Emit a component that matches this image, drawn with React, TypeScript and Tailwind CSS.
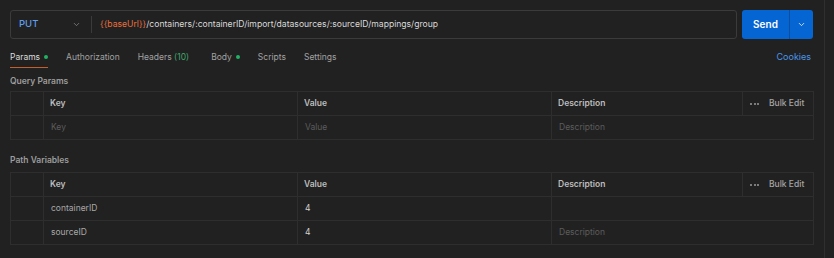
import { ChevronDown } from 'lucide-react'

const font = { fontFamily: 'Inter, "Noto Sans", sans-serif' }

type Row = { key: string; value: string; desc: string; placeholder?: boolean; descPlaceholder?: boolean }

function ParamTable({ rows }: { rows: Row[] }) {
  return (
    <div className="mx-[10px] border-x border-t border-[#2e2e2e] text-[8.5px]">
      <div className="flex h-[24px] border-b border-[#2e2e2e] font-semibold text-[#bdbdbd]">
        <div className="w-[33px] border-r border-[#2e2e2e]" />
        <div className="flex w-[254px] items-center border-r border-[#2e2e2e] pl-[6px]">Key</div>
        <div className="flex w-[254px] items-center border-r border-[#2e2e2e] pl-[6px]">Value</div>
        <div className="flex w-[191px] items-center border-r border-[#2e2e2e] pl-[6px]">Description</div>
        <div className="flex flex-1 items-center whitespace-nowrap pl-[7px] font-medium text-[#a6a6a6]">
          <span className="flex gap-[1.5px]">
            <span className="h-[2px] w-[2px] rounded-full bg-[#9a9a9a]" />
            <span className="h-[2px] w-[2px] rounded-full bg-[#9a9a9a]" />
            <span className="h-[2px] w-[2px] rounded-full bg-[#9a9a9a]" />
          </span>
          <span className="ml-[10px]">Bulk Edit</span>
        </div>
      </div>
      {rows.map((r, i) => (
        <div key={i} className="flex h-[24px] border-b border-[#2e2e2e]">
          <div className="w-[33px] border-r border-[#2e2e2e]" />
          <div className={`flex w-[254px] items-center border-r border-[#2e2e2e] pl-[7px] ${r.placeholder ? 'text-[#5c5c5c]' : 'text-[#a8a8a8]'}`}>{r.key}</div>
          <div className={`flex w-[254px] items-center border-r border-[#2e2e2e] pl-[7px] ${r.placeholder ? 'text-[#5c5c5c]' : 'text-[#d4d4d4]'}`}>{r.value}</div>
          <div className={`flex flex-1 items-center pl-[7px] ${r.descPlaceholder ? 'text-[#5c5c5c]' : 'text-[#a8a8a8]'}`}>{r.desc}</div>
        </div>
      ))}
    </div>
  )
}

export default function App() {
  return (
    <div className="flex h-[258px] w-[834px] bg-[#212121]" style={font}>
      <div className="w-[825px] border-r border-[#2f2f2f]">
        <div className="flex h-[49px] items-start gap-[5px] pl-[10px] pt-[10px]">
          <div className="flex h-[29px] w-[727px] items-center rounded-[3px] border border-[#3b3b3b]">
            <div className="flex w-[80px] items-center justify-between pl-[8px] pr-[10px]">
              <span className="text-[9.5px] font-medium text-[#5f9ee9]">PUT</span>
              <ChevronDown size={9} className="text-[#8a8a8a]" strokeWidth={2} />
            </div>
            <div className="h-[17px] w-px bg-[#3b3b3b]" />
            <div className="whitespace-nowrap pl-[8px] text-[8.6px] text-[#d9d9d9]">
              <span className="text-[#e9703f]">{'{{baseUrl}}'}</span>/containers/:containerID/import/datasources/:sourceID/mappings/group
            </div>
          </div>
          <div className="flex h-[29px] w-[71px] rounded-[3px] bg-[#0565d3] text-white">
            <div className="flex w-[48px] items-center justify-center border-r border-[#0a4ea3] text-[10px] font-semibold">Send</div>
            <div className="flex flex-1 items-center justify-center">
              <ChevronDown size={9} strokeWidth={2} />
            </div>
          </div>
        </div>
        <div className="flex h-[22px] items-start justify-between pl-[10px] pr-[13px] pt-[2px] text-[8.5px] leading-[12px]">
          <div className="flex gap-[18px] text-[#a1a1a1]">
            <div className="flex flex-col">
              <div className="flex items-center gap-[4px] text-[#dcdcdc]">
                Params <span className="h-[4px] w-[4px] rounded-full bg-[#1fb363]" />
              </div>
              <div className="mt-[4px] h-[1px] w-[38px] bg-[#c1602e]" />
            </div>
            <div>Authorization</div>
            <div>
              Headers <span className="text-[#3ca66b]">(10)</span>
            </div>
            <div className="ml-[4px] flex h-[12px] items-center gap-[4px]">
              Body <span className="h-[4px] w-[4px] rounded-full bg-[#1fb363]" />
            </div>
            <div>Scripts</div>
            <div>Settings</div>
          </div>
          <div className="text-[9px] text-[#4a97e8]">Cookies</div>
        </div>
        <div className="h-[20px] pl-[10px] text-[8.5px] font-semibold leading-[20px] text-[#9d9d9d]">Query Params</div>
        <ParamTable rows={[{ key: 'Key', value: 'Value', desc: 'Description', placeholder: true, descPlaceholder: true }]} />
        <div className="h-[32px] pl-[10px] pt-[14px] text-[8.5px] font-semibold leading-[12px] text-[#9d9d9d]">Path Variables</div>
        <ParamTable
          rows={[
            { key: 'containerID', value: '4', desc: '' },
            { key: 'sourceID', value: '4', desc: 'Description', descPlaceholder: true },
          ]}
        />
      </div>
    </div>
  )
}
